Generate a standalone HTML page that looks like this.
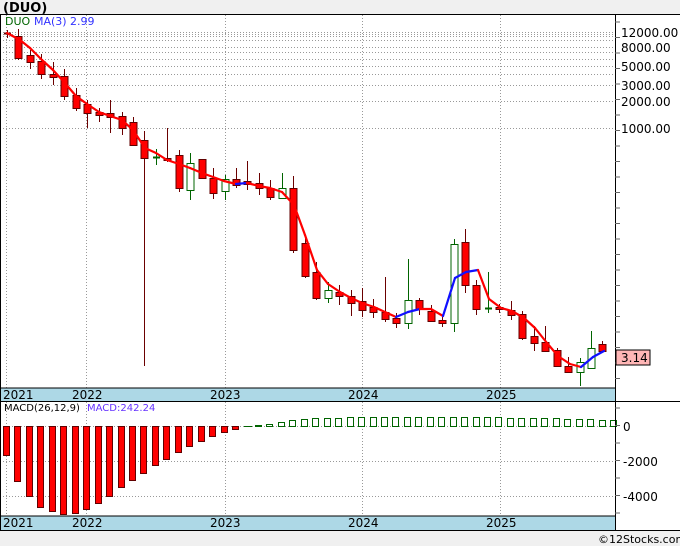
<!DOCTYPE html>
<html><head><meta charset="utf-8"><style>
html,body{margin:0;padding:0;background:#f0f0f0;}
body{width:680px;height:546px;overflow:hidden;position:relative;font-family:"DejaVu Sans","Liberation Sans",sans-serif;}
svg{position:absolute;left:0;top:0;}
text{font-family:"DejaVu Sans","Liberation Sans",sans-serif;}
</style></head><body>
<svg id="s" width="680" height="546" xmlns="http://www.w3.org/2000/svg">
<rect x="0" y="14" width="680" height="517" fill="#fff"/>
<text x="3" y="12" font-size="13" font-weight="bold" fill="#000">(DUO)</text>
<g id="grid" stroke="#999" stroke-dasharray="1,2" stroke-width="1"></g>
<!-- date bars -->
<rect x="0" y="388" width="615" height="13" fill="#add8e6"/>
<rect x="0" y="516" width="615" height="14" fill="#add8e6"/>
<line x1="0" y1="388" x2="615" y2="388" stroke="#000"/>
<line x1="0" y1="516" x2="615" y2="516" stroke="#000"/>
<g font-size="12" fill="#000">
<text x="3" y="399">2021</text><text x="72" y="399">2022</text><text x="210" y="399">2023</text><text x="348" y="399">2024</text><text x="486" y="399">2025</text>
<text x="3" y="527">2021</text><text x="72" y="527">2022</text><text x="210" y="527">2023</text><text x="348" y="527">2024</text><text x="486" y="527">2025</text>
</g>
<g id="c"></g>
<g id="m"></g>
<line x1="0" y1="14.5" x2="680" y2="14.5" stroke="#000"/>
<line x1="0" y1="401.5" x2="680" y2="401.5" stroke="#000"/>
<line x1="0" y1="530.5" x2="680" y2="530.5" stroke="#000"/>
<line x1="615.5" y1="14" x2="615.5" y2="530" stroke="#000"/>
<line x1="0.5" y1="14" x2="0.5" y2="530" stroke="#000"/>
<g id="ticks" stroke="#666"></g>
<g font-size="12" fill="#000">
<text x="621" y="37">12000.00</text><text x="621" y="52">8000.00</text><text x="621" y="71">5000.00</text>
<text x="621" y="90">3000.00</text><text x="621" y="106">2000.00</text><text x="621" y="133">1000.00</text>
<text x="623" y="431">0</text><text x="623" y="466">-2000</text><text x="623" y="501">-4000</text>
</g>
<rect x="616" y="350" width="34" height="15" fill="#ffb6b6" stroke="#000"/>
<text x="621" y="362" font-size="12" fill="#000">3.14</text>
<text x="5" y="25" font-size="11" fill="#006400">DUO</text>
<text x="34" y="25" font-size="11" fill="#3333ff">MA(3)</text>
<text x="70" y="25" font-size="11" fill="#3333ff">2.99</text>
<text x="4" y="411" font-size="10" fill="#000">MACD(26,12,9)</text>
<text x="87" y="411" font-size="10" fill="#6633ff">MACD:242.24</text>
<text x="598" y="543" font-size="11" fill="#000">©12Stocks.com</text>
</svg>
<script>
var NS="http://www.w3.org/2000/svg";
function el(p,t,a){var e=document.createElementNS(NS,t);for(var k in a)e.setAttribute(k,a[k]);document.getElementById(p).appendChild(e);return e;}
// grid
[32,34,36,40,47,52,59,66,74,85,101,128].forEach(function(y){el("grid","line",{x1:0,y1:y+.5,x2:615,y2:y+.5});});
[461,496,426].forEach(function(y){el("grid","line",{x1:0,y1:y+.5,x2:615,y2:y+.5});});
[6,86,225,362,500].forEach(function(x){el("grid","line",{x1:x+.5,y1:15,x2:x+.5,y2:388});el("grid","line",{x1:x+.5,y1:402,x2:x+.5,y2:516});});
// ticks
for(var y=22;y<390;y+=15.5)el("ticks","line",{x1:615,y1:y,x2:620,y2:y});
for(var y=408;y<530;y+=17.5)el("ticks","line",{x1:615,y1:y,x2:620,y2:y});
// candles: [type, bodyTop, bodyBot, wickTop, wickBot]  r=red g=green
var C=[["rc",33,35,30,38],["r",36,58,29,60],["r",55,62,50,69],["r",61,74,54,79],["r",74,77,62,85],["r",76,96,69,100],["r",95,108,88,111],["r",104,113,100,128],["r",112,115,108,122],["r",113,117,100,133],["r",116,128,112,135],["r",122,145,117,145],["r",140,158,131,366],["gc",157,158,149,165],["r",158,160,128,162],["r",155,188,150,192],["g",163,190,153,200],["r",159,178,159,179],["r",178,193,168,199],["g",179,191,175,200],["r",179,185,168,188],["r",181,184,161,190],["r",183,188,173,195],["r",188,197,180,200],["g",188,198,173,199],["r",188,250,176,253],["r",243,276,237,278],["r",272,298,262,300],["g",290,298,282,303],["r",292,296,285,305],["r",296,303,290,316],["r",301,310,288,317],["r",307,312,299,318],["r",312,319,277,322],["r",318,323,313,328],["g",300,323,259,329],["r",300,309,298,315],["r",311,321,305,322],["r",320,323,317,327],["g",244,323,239,332],["r",242,285,229,293],["r",285,309,280,315],["gc",308,309,272,313],["r",307,309,304,313],["r",310,315,301,320],["r",314,338,311,340],["r",336,343,326,351],["r",342,351,326,352],["r",350,366,348,366],["r",366,372,357,372],["g",362,372,358,386],["g",348,368,331,368],["r",344,351,341,352]];
C.forEach(function(c,i){var x=Math.round(7+11.45*i);var red=c[0][0]=="r";var col=red?"#6b0000":"#006400";
el("c","line",{x1:x+.5,y1:c[3],x2:x+.5,y2:c[4],stroke:col,"stroke-width":1});
if(c[0].length==2){el("c","line",{x1:x-3,y1:c[1]+.5,x2:x+4,y2:c[1]+.5,stroke:col,"stroke-width":2});}
else el("c","rect",{x:x-3,y:c[1]+.5,width:7,height:Math.max(1,c[2]-c[1]),fill:red?"#ff0000":"#fff",stroke:red?"#600000":"#006400","stroke-width":1});});
// MA
var M=[[7,33],[20,40],[30,48],[42,60],[53,70],[64,82],[76,96],[87,104],[99,112],[110,116],[122,120],[133,130],[145,148],[156,153],[167,160],[179,164],[190,168],[202,173],[213,177],[224,181],[236,184],[247,183],[259,186],[270,188],[282,192],[294,205],[305,235],[317,270],[328,284],[340,292],[351,298],[362,303],[374,307],[385,312],[396,317],[408,312],[420,309],[431,309],[443,316],[455,278],[466,272],[478,270],[489,299],[501,308],[512,311],[524,318],[535,328],[547,343],[558,356],[570,364],[581,367],[593,357],[604,351]];
for(var i=1;i<M.length;i++){var up=M[i][1]<M[i-1][1];el("m","line",{x1:M[i-1][0],y1:M[i-1][1],x2:M[i][0],y2:M[i][1],stroke:up?"#1010ff":"#ff0000","stroke-width":2.2,"stroke-linecap":"round"});}
// MACD
var R=[456,482,497,508,512,515,514,510,504,497,488,481,474,466,460,453,447,442,437,433,430];
R.forEach(function(b,i){var x=Math.round(3+11.45*i);el("c","rect",{x:x+.5,y:426.5,width:6,height:b-427,fill:"#ff0000",stroke:"#600000"});});
el("c","line",{x1:244,y1:426.5,x2:252,y2:426.5,stroke:"#006400"});
var G=[425,424,422,420,419,418,418,418,417,417,417,417,417,417,417,417,417,417,417,417,417,417,418,418,418,418,418,419,419,419,420,420];
G.forEach(function(t,i){var x=Math.round(255+11.45*i);el("c","rect",{x:x+.5,y:t+.5,width:6,height:426-t,fill:"#fff",stroke:"#006400"});});
</script>
</body></html>
